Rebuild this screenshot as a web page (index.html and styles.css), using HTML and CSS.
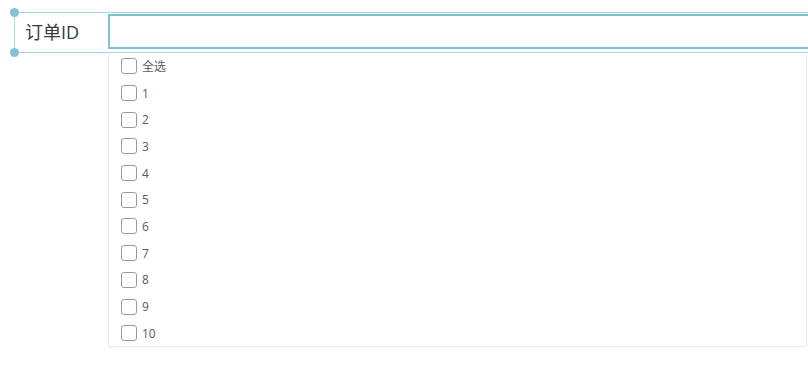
FILE: index.html
```html
<!DOCTYPE html>
<html lang="zh">
<head>
<meta charset="utf-8">
<link rel="stylesheet" href="styles.css">
</head>
<body>
<div class="filter">
  <span class="handle handle-top"></span>
  <span class="handle handle-bottom"></span>
  <div class="label">订单ID</div>
  <div class="field">
    <input class="input" type="text">
    <ul class="dropdown">
      <li class="option"><span class="box"></span><span class="text">全选</span></li>
      <li class="option"><span class="box"></span><span class="text">1</span></li>
      <li class="option"><span class="box"></span><span class="text">2</span></li>
      <li class="option"><span class="box"></span><span class="text">3</span></li>
      <li class="option"><span class="box"></span><span class="text">4</span></li>
      <li class="option"><span class="box"></span><span class="text">5</span></li>
      <li class="option"><span class="box"></span><span class="text">6</span></li>
      <li class="option"><span class="box"></span><span class="text">7</span></li>
      <li class="option"><span class="box"></span><span class="text">8</span></li>
      <li class="option"><span class="box"></span><span class="text">9</span></li>
      <li class="option"><span class="box"></span><span class="text">10</span></li>
    </ul>
  </div>
</div>
</body>
</html>
```
FILE: styles.css
```css
html {
  overflow: hidden;
  height: 100%;
}
body {
  margin: 0;
  padding: 0;
  min-height: 100%;
  background: #fff;
  font-family: "Open Sans", "Noto Sans CJK SC", sans-serif;
  overflow: hidden;
}
.filter {
  position: relative;
  margin: 12px 0 0 14px;
  width: 830px;
  height: 39px;
  border: 1px solid #a9d7e2;
  display: flex;
  align-items: flex-start;
}
.handle {
  position: absolute;
  left: -5px;
  width: 9px;
  height: 9px;
  border-radius: 50%;
  background: #86c2d3;
  z-index: 2;
}
.handle-top { top: -5px; }
.handle-bottom { bottom: -5px; }
.label {
  width: 93px;
  flex: none;
  box-sizing: border-box;
  padding-left: 10px;
  height: 39px;
  line-height: 38px;
  font-size: 18px;
  color: #3a3a3a;
}
.field {
  position: relative;
  flex: 1;
  padding-top: 1px;
}
.input {
  display: block;
  box-sizing: border-box;
  width: 100%;
  height: 35px;
  margin: 0;
  border: 2px solid #80c0d3;
  outline: none;
  background: #fff;
  padding: 0 8px;
}
.dropdown {
  position: absolute;
  left: 0;
  top: 40px;
  width: 699px;
  height: 294px;
  box-sizing: border-box;
  margin: 0;
  padding: 0;
  list-style: none;
  background: #fff;
  border: 1px solid #efefef;
  border-top: none;
  box-shadow: 0 1px 2px rgba(0, 0, 0, 0.03);
}
.option {
  display: flex;
  align-items: center;
  height: 26.7px;
  padding-left: 12px;
}
.box {
  width: 16px;
  height: 16px;
  box-sizing: border-box;
  border: 1px solid #9a9a9a;
  border-radius: 3px;
  background: #fff;
  flex: none;
}
.text {
  margin-left: 5px;
  font-size: 12px;
  color: #5a5a5a;
}
```
